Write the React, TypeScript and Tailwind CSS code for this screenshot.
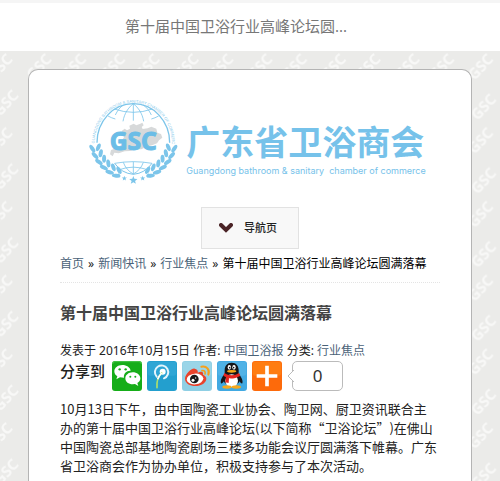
import type { ReactNode } from 'react';

const TITLE = '第十届中国卫浴行业高峰论坛圆满落幕';

const CRUMBS = [
  { id: 'home', label: '首页' },
  { id: 'news', label: '新闻快讯' },
  { id: 'focus', label: '行业焦点' },
];

const LAUREL_ANGLES = [0, 10, 20, 30, 40, 50];

const STARS = [
  { x: 115, y: 255, r: 6 },
  { x: 133, y: 265, r: 8 },
  { x: 160, y: 271, r: 13 },
  { x: 188, y: 265, r: 8 },
  { x: 205, y: 255, r: 6 },
];

function starPoints(x: number, y: number, r: number) {
  return Array.from({ length: 10 }, (_, i) => {
    const radius = i % 2 ? r * 0.42 : r;
    const a = (Math.PI / 5) * i - Math.PI / 2;
    return `${x + radius * Math.cos(a)},${y + radius * Math.sin(a)}`;
  }).join(' ');
}

function Laurel() {
  return (
    <g fill="#7cc5ea">
      {LAUREL_ANGLES.map((deg) => (
        <g key={deg} transform={`rotate(${-deg} 160 140)`}>
          <ellipse cx="37" cy="176" rx="6" ry="13" transform="rotate(-34 37 176)" />
          <ellipse cx="55" cy="172" rx="6" ry="12" transform="rotate(22 55 172)" />
        </g>
      ))}
    </g>
  );
}

function Emblem() {
  return (
    <svg
      viewBox="24 15 276 270"
      className="h-[90px] w-[92px] shrink-0 overflow-visible"
      aria-hidden="true"
    >
      <defs>
        <path id="ring" d="M44 160 A116 122 0 0 1 276 160" />
      </defs>
      <text fill="#8fcdec" fontSize="12" fontFamily="Liberation Sans">
        <textPath href="#ring">GUANGDONG BATHROOM &amp; SANITARY CHAMBER OF COMMERCE</textPath>
      </text>
      <g fill="none" stroke="#7cc5ea" strokeWidth="2.5">
        <path d="M51 158 A109 117 0 0 1 269 158" strokeWidth="4" />
        <path d="M160 41 V92 M160 41 C145 53 133 70 129 94 M160 41 C175 53 187 70 191 94" />
        <path d="M130 45 C120 52 112 62 106 75 M190 45 C200 52 208 62 214 75" />
        <path d="M103 57 Q160 77 217 57 M84 78 Q95 84 106 87 M236 78 Q225 84 214 87" />
        <path d="M104 220 Q160 210 216 220 M118 239 Q160 224 202 239" />
        <path d="M104 220 Q125 250 160 253 Q195 250 216 220" strokeWidth="3" />
        <path d="M160 215 V252 M130 217 Q138 240 160 252 Q182 240 190 217" />
      </g>
      <path
        fill="#d7d9da"
        d="M124 124 L134 116 L141 121 L150 116 L148 107 L161 101 L169 106 L181 101 L187 98 L191 106 L185 111 L188 117 L203 115 L214 110 L229 116 L232 128 L243 132 L247 143 L237 151 L231 160 L216 166 L199 170 L184 178 L166 178 L150 183 L134 184 L116 190 L103 188 L98 199 L90 193 L93 180 L111 174 L125 164 L128 148 L135 137 Z"
      />
      <text
        x="160"
        y="179"
        textAnchor="middle"
        fill="#6bbde7"
        stroke="#6bbde7"
        strokeWidth="3"
        strokeLinejoin="round"
        fontSize="74"
        fontWeight="700"
        fontFamily="Noto Sans"
      >
        GSC
      </text>
      <Laurel />
      <g transform="translate(320 0) scale(-1 1)">
        <Laurel />
      </g>
      {STARS.map(({ x, y, r }) => (
        <polygon key={x} points={starPoints(x, y, r)} fill="#7cc5ea" />
      ))}
    </svg>
  );
}

const MARKS = [
  { x: -6, y: 30 },
  { x: 33, y: 30 },
  { x: 0, y: 66 },
  { x: 36, y: 70 },
];

function Wallpaper() {
  return (
    <svg className="absolute inset-0 -z-10 h-full w-full" aria-hidden="true">
      <defs>
        <pattern id="gsc" width="73.6" height="73.8" patternUnits="userSpaceOnUse">
          {MARKS.flatMap(({ x, y }) =>
            [-73.8, 0, 73.8].flatMap((dy) =>
              [-73.6, 0, 73.6].map((dx) => (
                <text
                  key={`${x} ${y} ${dx} ${dy}`}
                  transform={`translate(${x + dx} ${y + dy}) rotate(-47)`}
                  fill="#f8f8f7"
                  fontSize="15"
                  fontWeight="700"
                  fontFamily="Noto Sans"
                >
                  GSC
                </text>
              )),
            ),
          )}
        </pattern>
      </defs>
      <rect width="100%" height="100%" fill="url(#gsc)" />
    </svg>
  );
}

function WechatIcon() {
  return (
    <>
      <rect width="90" height="90" rx="9" fill="#16ad19" />
      <path d="M2 9 Q2 2 9 2 H81 Q88 2 88 9" fill="none" stroke="#4bc64c" strokeWidth="3" />
      <path
        fill="#fff"
        d="M31 12 C17 12 7 21 7 31 C7 37 10 43 16 46 L13 55 L24 49 L36 50 C34 37 44 28 56 29 C54 19 44 12 31 12 Z"
      />
      <path
        fill="#fff"
        d="M62 34 C49 34 40 43 40 52 C40 63 50 70 62 70 L69 69 L79 75 L76 66 C82 63 85 58 85 52 C85 42 75 34 62 34 Z"
      />
      <g fill="#16ad19">
        <circle cx="23" cy="25" r="3.5" />
        <circle cx="41" cy="25" r="3.5" />
        <circle cx="55" cy="47" r="3" />
        <circle cx="70" cy="47" r="3" />
      </g>
    </>
  );
}

function TencentIcon() {
  return (
    <>
      <rect width="90" height="90" rx="9" fill="#239fce" />
      <rect x="2" y="2" width="86" height="42" rx="8" fill="#2fa6d5" />
      <path
        d="M29 47 A20 20 0 1 1 51 52"
        fill="none"
        stroke="#e4f5fc"
        strokeWidth="6"
        strokeLinecap="round"
      />
      <circle cx="47" cy="32" r="9" fill="#fff" />
      <path
        d="M44 36 C33 47 28 60 30 80"
        fill="none"
        stroke="#aee06a"
        strokeWidth="5"
        strokeLinecap="round"
      />
      <path d="M44 36 C38 42 34 48 32 55" fill="none" stroke="#fff" strokeWidth="5" />
    </>
  );
}

function SinaIcon() {
  return (
    <>
      <rect width="90" height="90" rx="9" fill="#8fcfe4" />
      <rect x="2" y="2" width="86" height="42" rx="8" fill="#9ad5e8" />
      <path
        fill="#e9432b"
        d="M38 23 C30 20 9 39 9 53 C9 67 24 75 40 75 C58 75 73 65 73 53 C73 46 67 43 63 41 C66 32 57 30 47 35 C49 29 45 24 38 23 Z"
      />
      <ellipse cx="39" cy="54" rx="25" ry="16" fill="#fff" transform="rotate(-6 39 54)" />
      <circle cx="37" cy="54" r="13" fill="#181818" />
      <circle cx="33" cy="58" r="4.5" fill="#fff" />
      <circle cx="41" cy="51" r="2" fill="#fff" />
      <g fill="none" stroke="#f6a01c" strokeLinecap="round">
        <path d="M58 17 C74 13 84 27 79 41" strokeWidth="6" />
        <path d="M60 29 C67 27 71 32 69 39" strokeWidth="5" />
      </g>
    </>
  );
}

function QqIcon() {
  return (
    <>
      <rect width="90" height="90" rx="9" fill="#41a9e2" />
      <rect x="2" y="2" width="86" height="42" rx="8" fill="#50b2e6" />
      <path
        fill="#14161a"
        d="M44 5 C30 5 23 15 23 28 L23 38 C15 47 9 59 12 67 C14 69 18 65 21 61 C24 76 64 76 67 61 C70 65 74 69 76 67 C79 59 73 47 65 38 L65 28 C65 15 58 5 44 5 Z"
      />
      <ellipse cx="44" cy="59" rx="19" ry="19" fill="#fff" />
      <ellipse cx="30" cy="78" rx="14" ry="5" fill="#f6a81b" />
      <ellipse cx="58" cy="78" rx="14" ry="5" fill="#f6a81b" />
      <ellipse cx="37" cy="19" rx="5" ry="7" fill="#fff" />
      <ellipse cx="51" cy="19" rx="5" ry="7" fill="#fff" />
      <circle cx="38" cy="20" r="2.4" fill="#14161a" />
      <circle cx="50" cy="20" r="2.4" fill="#14161a" />
      <ellipse cx="44" cy="31" rx="14" ry="4" fill="#f6a81b" />
      <path
        fill="#e52620"
        d="M22 36 C35 45 53 45 66 36 L70 44 C58 52 44 53 36 52 L35 66 L25 64 L27 49 L19 44 Z"
      />
    </>
  );
}

function MoreIcon() {
  return (
    <>
      <rect width="90" height="90" rx="9" fill="#fd6a0b" />
      <rect x="2" y="2" width="86" height="42" rx="8" fill="#ff7d12" />
      <path d="M45 14 V76 M14 45 H76" stroke="#fff" strokeWidth="11" />
    </>
  );
}

const SHARES: { id: string; label: string; icon: ReactNode }[] = [
  { id: 'wechat', label: '微信', icon: <WechatIcon /> },
  { id: 'tencent', label: '腾讯微博', icon: <TencentIcon /> },
  { id: 'sina', label: '新浪微博', icon: <SinaIcon /> },
  { id: 'qq', label: 'QQ', icon: <QqIcon /> },
  { id: 'more', label: '更多', icon: <MoreIcon /> },
];

function ShareBar() {
  return (
    <div className="flex items-center gap-[5px]">
      <span className="mr-[2px] self-start text-[15px] leading-5 font-medium text-[#222]">
        分享到
      </span>
      {SHARES.map(({ id, label, icon }) => (
        <button key={id} type="button" aria-label={label} className="cursor-pointer">
          <svg viewBox="0 0 90 90" className="h-[30px] w-[30px]" aria-hidden="true">
            {icon}
          </svg>
        </button>
      ))}
      <div className="relative ml-[5px] h-[30px] w-[51px] rounded-[5px] border border-[#bbb] bg-white text-center text-[17px] leading-7 text-[#333]">
        <svg viewBox="0 0 7 12" className="absolute top-2 -left-[6px] h-3 w-[7px]" aria-hidden="true">
          <path d="M7 0 L1 6 L7 12" fill="#fff" stroke="#bbb" />
        </svg>
        0
      </div>
    </div>
  );
}

function Brand() {
  return (
    <a href="#" className="flex justify-center pl-[14px]">
      <Emblem />
      <span className="ml-[6px] flex flex-col pt-6 whitespace-nowrap text-[#76c2ea]">
        <span className="text-[34px] leading-[46px] font-bold">广东省卫浴商会</span>
        <span className="font-['Inter'] text-[9px] leading-3">
          Guangdong bathroom &amp; sanitary &nbsp;chamber of commerce
        </span>
      </span>
    </a>
  );
}

function Breadcrumb() {
  return (
    <nav className="border-b border-dotted border-[#e4e4e4] pb-2 text-[12px] leading-5 text-[#222]">
      {CRUMBS.map(({ id, label }) => (
        <span key={id}>
          <a href="#" className="text-[#4a6278]">
            {label}
          </a>
          <span className="mx-1">»</span>
        </span>
      ))}
      <span className="text-black">{TITLE}</span>
    </nav>
  );
}

export default function App() {
  return (
    <div className="flex min-h-screen flex-col bg-[#ebebe9] font-['Noto_Sans','Noto_Sans_CJK_SC',sans-serif]">
      <header className="h-[51px] border-t-[3px] border-[#f5f5f5] bg-white pl-[125px] text-[15px] leading-[46px] text-[#777]">
        {TITLE.slice(0, 14)}...
      </header>
      <div className="relative isolate flex flex-1 flex-col px-7 pt-[18px]">
        <Wallpaper />
        <main className="flex-1 rounded-t-[10px] border border-b-0 border-[#b4b4b4] bg-white px-[31px] pt-[25px]">
          <Brand />
          <button
            type="button"
            className="mx-auto mt-[22px] flex h-[42px] w-[98px] cursor-pointer items-center border border-[#e2e2e2] bg-[#f8f8f8] pl-[17px] text-[11px] font-medium text-[#222]"
          >
            <svg viewBox="0 0 14 10" className="mr-[11px] h-[10px] w-[14px]" aria-hidden="true">
              <path d="M2 2 L7 7 L12 2" fill="none" stroke="#4a2326" strokeWidth="4" strokeLinecap="round" />
            </svg>
            导航页
          </button>
          <div className="pt-[5px]">
            <Breadcrumb />
          </div>
          <article className="pt-[18px]">
            <h1 className="text-[16px] leading-6 font-bold text-[#444]">{TITLE}</h1>
            <p className="mt-4 text-[12px] leading-5 text-[#222]">
              发表于 2016年10月15日 作者:{' '}
              <a href="#" className="text-[#4a6278]">
                中国卫浴报
              </a>{' '}
              分类:{' '}
              <a href="#" className="text-[#4a6278]">
                行业焦点
              </a>
            </p>
            <ShareBar />
            <p className="mt-2 pr-[2px] font-['Noto_Sans_CJK_SC',sans-serif] text-[13px] leading-[19px] text-[#222] [text-spacing-trim:space-all]">
              10月13日下午，由中国陶瓷工业协会、陶卫网、厨卫资讯联合主办的第十届中国卫浴行业高峰论坛(以下简称“卫浴论坛”)在佛山中国陶瓷总部基地陶瓷剧场三楼多功能会议厅圆满落下帷幕。广东省卫浴商会作为协办单位，积极支持参与了本次活动。
            </p>
          </article>
        </main>
      </div>
    </div>
  );
}
